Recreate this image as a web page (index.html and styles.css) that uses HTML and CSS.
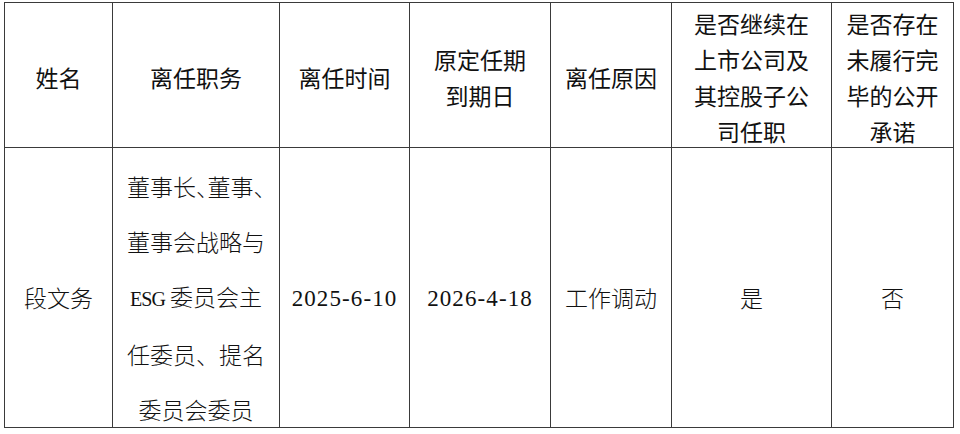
FILE: index.html
```html
<!DOCTYPE html>
<html lang="zh-CN">
<head>
<meta charset="utf-8">
<link rel="stylesheet" href="styles.css">
</head>
<body>
<table class="tbl">
  <colgroup>
    <col class="c1"><col class="c2"><col class="c3"><col class="c4"><col class="c5"><col class="c6"><col class="c7">
  </colgroup>
  <thead>
    <tr class="head">
      <th><div class="hin one">姓名</div></th>
      <th><div class="hin one">离任职务</div></th>
      <th><div class="hin one">离任时间</div></th>
      <th><div class="hin">原定任期<br>到期日</div></th>
      <th><div class="hin one">离任原因</div></th>
      <th><div class="hin">是否继续在<br>上市公司及<br>其控股子公<br>司任职</div></th>
      <th><div class="hin">是否存在<br>未履行完<br>毕的公开<br>承诺</div></th>
    </tr>
  </thead>
  <tbody>
    <tr class="body">
      <td><div class="bin">段文务</div></td>
      <td><div class="bin">董事长<span class="half">、</span>董事<span class="half">、</span><br>董事会战略与<br><span class="lat esg">ESG</span> 委员会主<br>任委员、提名<br>委员会委员</div></td>
      <td><div class="bin"><span class="lat num">2025-6-10</span></div></td>
      <td><div class="bin"><span class="lat num">2026-4-18</span></div></td>
      <td><div class="bin">工作调动</div></td>
      <td><div class="bin">是</div></td>
      <td><div class="bin">否</div></td>
    </tr>
  </tbody>
</table>
</body>
</html>
```

FILE: styles.css
```css
html, body {
  margin: 0;
  padding: 0;
  background: #ffffff;
}

body {
  padding: 2px 0 0 4px;
}

.tbl {
  border-collapse: collapse;
  table-layout: fixed;
  width: 950px;
  font-family: "Noto Sans CJK SC", sans-serif;
  color: #111111;
}

.c1 { width: 108px; }
.c2 { width: 167px; }
.c3 { width: 130px; }
.c4 { width: 141px; }
.c5 { width: 121px; }
.c6 { width: 160px; }
.c7 { width: 122px; }

.tbl th,
.tbl td {
  border: 1px solid #3a3a3a;
  padding: 0;
  text-align: center;
  vertical-align: middle;
}

.head th {
  height: 144px;
  font-weight: 400;
  font-size: 23px;
}

.hin {
  line-height: 36px;
  margin: 2px 0 -2px;
}

.body td {
  height: 279px;
  font-size: 23px;
  font-weight: 300;
}

.bin {
  line-height: 55px;
  margin: 10px 0 -10px;
}

.half {
  font-feature-settings: "halt" 1;
}

.lat {
  font-family: "Liberation Serif", serif;
  font-weight: 400;
}

.num {
  letter-spacing: 1.1px;
}

.esg {
  font-size: 20px;
  letter-spacing: -1px;
}
```
